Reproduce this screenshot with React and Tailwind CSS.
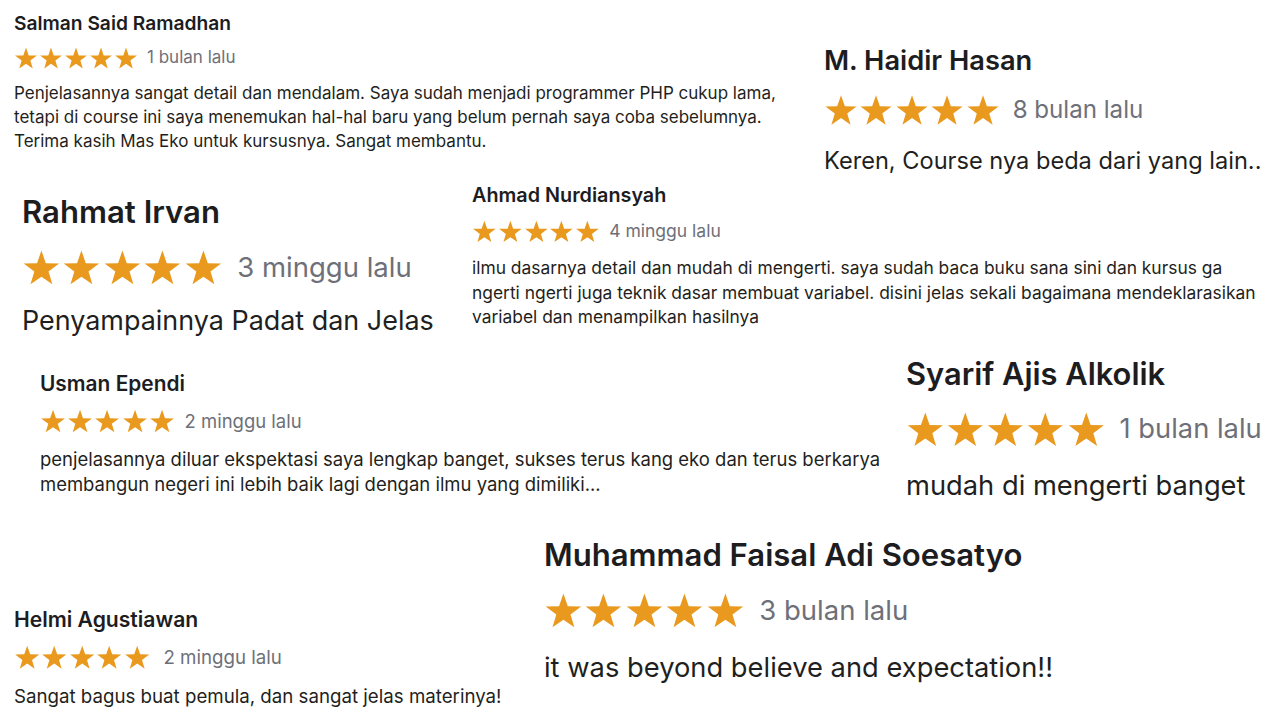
import React from "react";

const reviews = [
  {
    name: "Salman Said Ramadhan",
    date: "1 bulan lalu",
    lines: [
      "Penjelasannya sangat detail dan mendalam. Saya sudah menjadi programmer PHP cukup lama,",
      "tetapi di course ini saya menemukan hal-hal baru yang belum pernah saya coba sebelumnya.",
      "Terima kasih Mas Eko untuk kursusnya. Sangat membantu.",
    ],
    cls: "left-[14px] top-[12px] text-[16px]",
  },
  {
    name: "M. Haidir Hasan",
    date: "8 bulan lalu",
    lines: ["Keren, Course nya beda dari yang lain.."],
    cls: "left-[824px] top-[45px] text-[22.7px] [&_p]:text-[1.04em]",
  },
  {
    name: "Rahmat Irvan",
    date: "3 minggu lalu",
    lines: ["Penyampainnya Padat dan Jelas"],
    cls: "left-[22px] top-[193px] text-[25.9px] [&_p]:text-[1.04em] [&_p]:mt-[0.55em]",
  },
  {
    name: "Ahmad Nurdiansyah",
    date: "4 minggu lalu",
    lines: [
      "ilmu dasarnya detail dan mudah di mengerti. saya sudah baca buku sana sini dan kursus ga",
      "ngerti ngerti juga teknik dasar membuat variabel. disini jelas sekali bagaimana mendeklarasikan",
      "variabel dan menampilkan hasilnya",
    ],
    cls: "left-[472px] top-[184px] text-[16.5px] [&_p]:text-[1.055em]",
  },
  {
    name: "Usman Ependi",
    date: "2 minggu lalu",
    lines: [
      "penjelasannya diluar ekspektasi saya lengkap banget, sukses terus kang eko dan terus berkarya",
      "membangun negeri ini lebih baik lagi dengan ilmu yang dimiliki...",
    ],
    cls: "left-[40px] top-[371px] text-[17.4px] [&_p]:leading-[1.35]",
  },
  {
    name: "Syarif Ajis Alkolik",
    date: "1 bulan lalu",
    lines: ["mudah di mengerti banget"],
    cls: "left-[906px] top-[355px] text-[25.7px]",
  },
  {
    name: "Helmi Agustiawan",
    date: "2 minggu lalu",
    lines: ["Sangat bagus buat pemula, dan sangat jelas materinya!"],
    cls: "left-[14px] top-[607px] text-[17.6px] [&_span]:ml-[0.7em]",
  },
  {
    name: "Muhammad Faisal Adi Soesatyo",
    date: "3 bulan lalu",
    lines: ["it was beyond believe and expectation!!"],
    cls: "left-[544px] top-[536px] text-[25.9px] [&_p]:text-[1.055em]",
  },
];

function Star() {
  return (
    <svg viewBox="0 0 24 24" className="w-[1.5em] h-[1.5em] shrink-0" aria-hidden="true">
      <path
        d="M12 1.6 L14.7 9.38 L22.94 9.55 L16.38 14.52 L18.76 22.4 L12 17.7 L5.24 22.4 L7.62 14.52 L1.06 9.55 L9.3 9.38 Z"
        fill="#e9991e"
      />
    </svg>
  );
}

function Review({ r }) {
  return (
    <div className={`absolute whitespace-nowrap ${r.cls}`}>
      <div className="text-[1.2em] leading-[1.2] font-semibold text-[#1d1d1f]">{r.name}</div>
      <div className="mt-[0.69em] flex items-center h-[1.5em]">
        <div className="flex gap-[0.0625em]">
          <Star />
          <Star />
          <Star />
          <Star />
          <Star />
        </div>
        <span className="ml-[0.53em] text-[1.0625em] leading-[1.41] text-[#6e7079]">{r.date}</span>
      </div>
      <p className="mt-[0.7em] text-[1.0625em] leading-[1.41] text-[#1f1f21]">
        {r.lines.map((l, i) => (
          <React.Fragment key={i}>
            {i > 0 && <br />}
            {l}
          </React.Fragment>
        ))}
      </p>
    </div>
  );
}

export default function App() {
  return (
    <div className="relative w-[1280px] h-[720px] overflow-hidden bg-white font-['Inter','Noto_Sans',sans-serif]">
      {reviews.map((r) => (
        <Review key={r.name} r={r} />
      ))}
    </div>
  );
}
